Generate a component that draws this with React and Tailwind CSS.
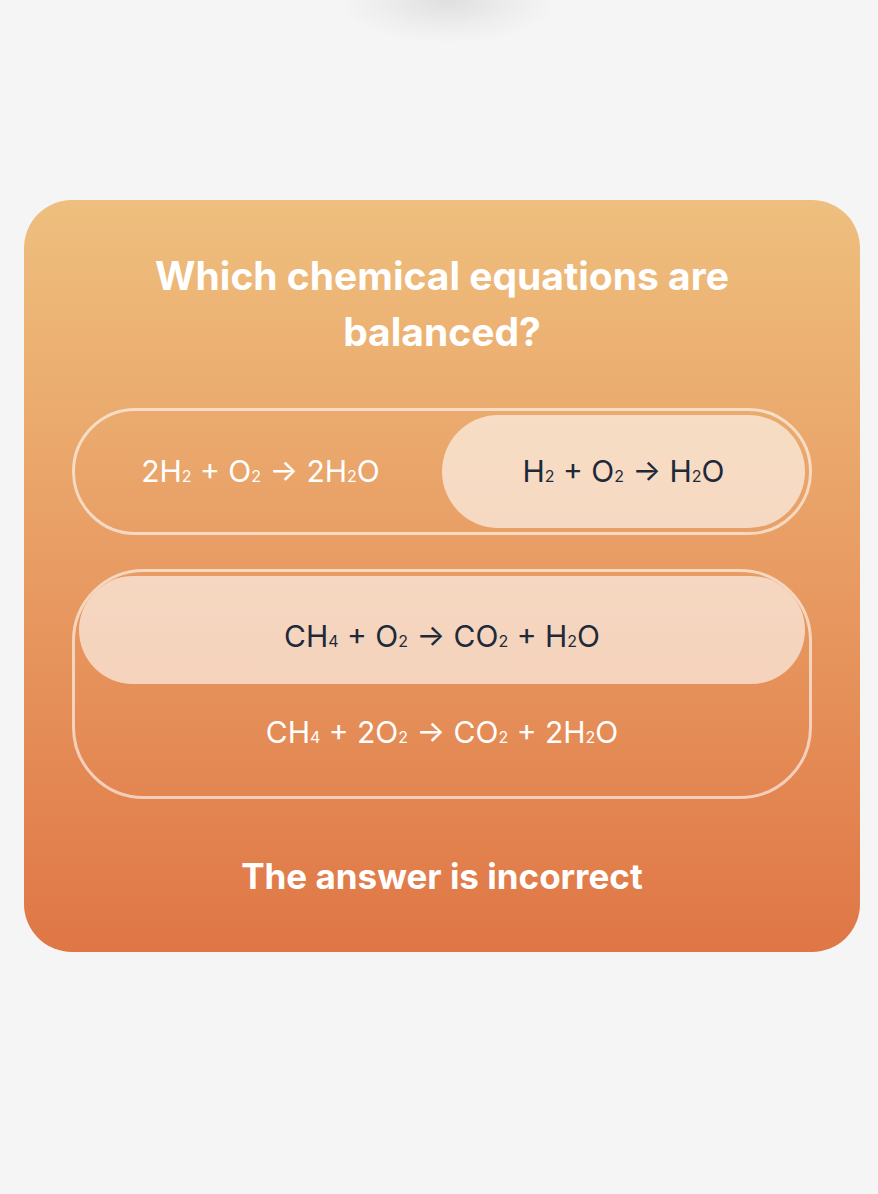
const Sub = ({ children }) => <span className="text-[16px]">{children}</span>

export default function App() {
  const font = { fontFamily: "Inter, 'Liberation Sans', sans-serif" }

  return (
    <div className="min-h-[1194px] w-full bg-[#f5f5f5]" style={font}>
      {/* soft shadow of something sitting above the viewport */}
      <div className="h-[60px] w-full bg-[radial-gradient(ellipse_110px_44px_at_51%_0%,rgba(0,0,0,0.09),rgba(0,0,0,0.03)_60%,transparent)]" />

      <div className="ml-6 mr-[18px] mt-[140px] rounded-[48px] bg-gradient-to-b from-[#eebf7e] to-[#df7646] px-12 pt-[48px] pb-[51px]">
        <h1 className="mx-auto max-w-[660px] text-center text-[39px] font-bold leading-[56px] text-white">
          Which chemical equations are balanced?
        </h1>

        {/* question 1: horizontal pair */}
        <div className="mt-[48px] grid grid-cols-2 rounded-full border-[3px] border-white/60 p-1">
          <div className="flex h-[113px] items-center justify-center rounded-full text-[30px] text-white">
            <span>2H<Sub>2</Sub> + O<Sub>2</Sub> → 2H<Sub>2</Sub>O</span>
          </div>
          <div className="flex h-[113px] items-center justify-center rounded-full bg-white/60 text-[30px] text-gray-800">
            <span>H<Sub>2</Sub> + O<Sub>2</Sub> → H<Sub>2</Sub>O</span>
          </div>
        </div>

        {/* question 2: vertical pair */}
        <div className="mt-[34px] flex flex-col overflow-hidden rounded-[72px] border-[3px] border-white/60 p-1">
          <div className="flex h-[108px] items-center justify-center rounded-full bg-white/60 pt-3 text-[30px] text-gray-800">
            <span>CH<Sub>4</Sub> + O<Sub>2</Sub> → CO<Sub>2</Sub> + H<Sub>2</Sub>O</span>
          </div>
          <div className="flex h-[108px] items-center justify-center rounded-full pb-3 text-[30px] text-white">
            <span>CH<Sub>4</Sub> + 2O<Sub>2</Sub> → CO<Sub>2</Sub> + 2H<Sub>2</Sub>O</span>
          </div>
        </div>

        <p className="mt-[52px] text-center text-[35px] font-bold leading-[50px] text-white">
          The answer is incorrect
        </p>
      </div>
    </div>
  )
}
